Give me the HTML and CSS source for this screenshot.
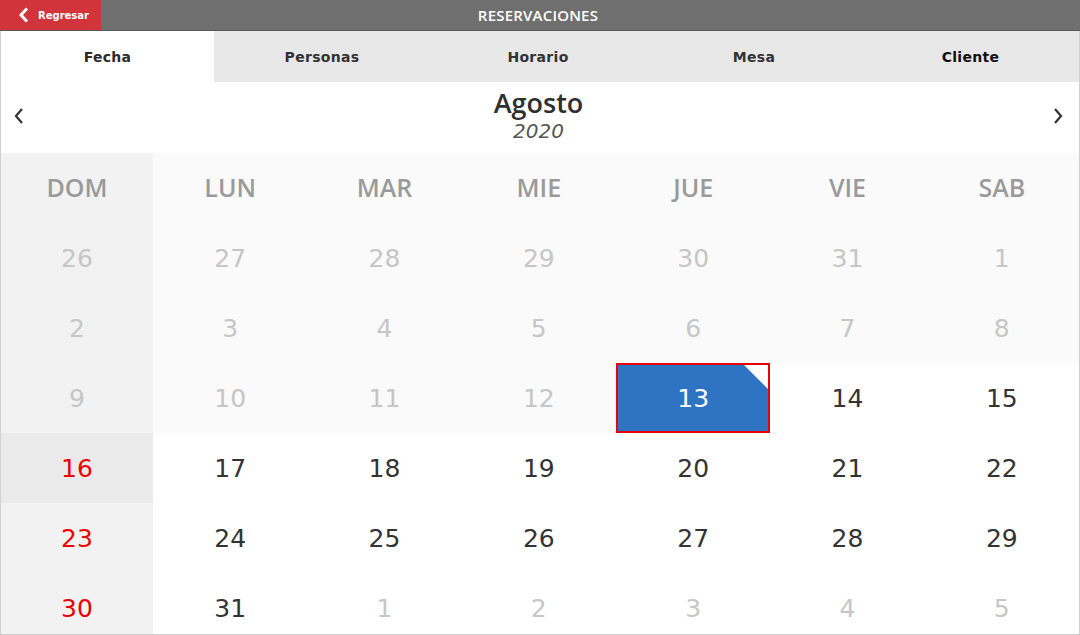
FILE: index.html
```html
<!DOCTYPE html>
<html lang="es">
<head>
<meta charset="utf-8">
<title>Reservaciones</title>
<link rel="stylesheet" href="styles.css">
</head>
<body>
<header class="topbar">
  <button class="back">
    <svg class="back-icon" width="10" height="16" viewBox="0 0 10 16"><path d="M8 1.5 L2 8 L8 14.5" fill="none" stroke="#fff" stroke-width="3"/></svg>
    <span>Regresar</span>
  </button>
  <h1 class="title">RESERVACIONES</h1>
  <span></span>
</header>
<main class="panel">
  <nav class="tabs">
    <div class="tab active">Fecha</div>
    <div class="tab">Personas</div>
    <div class="tab">Horario</div>
    <div class="tab">Mesa</div>
    <div class="tab">Cliente</div>
  </nav>
  <section class="month">
    <svg class="arrow" width="12" height="18" viewBox="0 0 12 18"><path d="M9 2 L3 9 L9 16" fill="none" stroke="#333" stroke-width="2.2"/></svg>
    <div class="month-title">
      <div class="month-name">Agosto</div>
      <div class="month-year">2020</div>
    </div>
    <svg class="arrow" width="12" height="18" viewBox="0 0 12 18"><path d="M3 2 L9 9 L3 16" fill="none" stroke="#333" stroke-width="2.2"/></svg>
  </section>
  <section class="calendar">
    <div class="dow sun">DOM</div>
    <div class="dow">LUN</div>
    <div class="dow">MAR</div>
    <div class="dow">MIE</div>
    <div class="dow">JUE</div>
    <div class="dow">VIE</div>
    <div class="dow">SAB</div>

    <div class="day sun past">26</div>
    <div class="day past">27</div>
    <div class="day past">28</div>
    <div class="day past">29</div>
    <div class="day past">30</div>
    <div class="day past">31</div>
    <div class="day past">1</div>

    <div class="day sun past">2</div>
    <div class="day past">3</div>
    <div class="day past">4</div>
    <div class="day past">5</div>
    <div class="day past">6</div>
    <div class="day past">7</div>
    <div class="day past">8</div>

    <div class="day sun past">9</div>
    <div class="day past">10</div>
    <div class="day past">11</div>
    <div class="day past">12</div>
    <div class="day selected">13</div>
    <div class="day">14</div>
    <div class="day">15</div>

    <div class="day sun red hover">16</div>
    <div class="day">17</div>
    <div class="day">18</div>
    <div class="day">19</div>
    <div class="day">20</div>
    <div class="day">21</div>
    <div class="day">22</div>

    <div class="day sun red">23</div>
    <div class="day">24</div>
    <div class="day">25</div>
    <div class="day">26</div>
    <div class="day">27</div>
    <div class="day">28</div>
    <div class="day">29</div>

    <div class="day sun red">30</div>
    <div class="day">31</div>
    <div class="day next">1</div>
    <div class="day next">2</div>
    <div class="day next">3</div>
    <div class="day next">4</div>
    <div class="day next">5</div>
  </section>
</main>
</body>
</html>
```

FILE: styles.css
```css
* { box-sizing: border-box; }
html, body { margin: 0; padding: 0; height: 100%; }
body {
  background: #fff;
  font-family: "DejaVu Sans", sans-serif;
  overflow: hidden;
  display: flex;
  flex-direction: column;
}

.topbar {
  height: 31px;
  flex: none;
  background: #6f6f6f;
  border-bottom: 1px solid #595959;
  display: grid;
  grid-template-columns: 101px 1fr 105px;
  align-items: center;
}
.back {
  height: 30px;
  margin: 0;
  border: 0;
  padding: 0 0 0 19px;
  background: #d1343a;
  color: #fff;
  display: flex;
  align-items: center;
  gap: 9px;
  font-family: "DejaVu Sans", sans-serif;
  font-weight: bold;
  font-size: 10px;
  cursor: pointer;
}
.back-icon { display: block; }
.title {
  margin: 0;
  text-align: center;
  color: #fff;
  font-family: "Open Sans", sans-serif;
  font-weight: 600;
  font-size: 15px;
  letter-spacing: 0.2px;
}

.panel {
  flex: 1;
  min-height: 0;
  border: 1px solid #cfcfcf;
  border-top: 0;
  overflow: hidden;
  display: flex;
  flex-direction: column;
}

.tabs {
  flex: none;
  height: 51px;
  display: grid;
  grid-template-columns: 213px 216px 216px 216px 1fr;
  background: #e8e8e8;
}
.tab {
  display: flex;
  align-items: center;
  justify-content: center;
  font-weight: bold;
  font-size: 14px;
  letter-spacing: 0.3px;
  color: #333;
}
.tab:last-child { color: #111; }
.tab.active { background: #fff; color: #2b2b2b; }

.month {
  flex: none;
  height: 71px;
  display: flex;
  align-items: center;
  justify-content: space-between;
  padding: 0 15px 2px 12px;
}
.arrow { display: block; margin-top: -2px; }
.month-title { text-align: center; margin-left: 0; }
.month-name {
  font-family: "Open Sans", sans-serif;
  font-weight: 600;
  font-size: 27px;
  color: #2f2f2f;
  line-height: 28px;
  margin-top: -1px;
}
.month-year {
  font-family: "DejaVu Sans", sans-serif;
  font-style: italic;
  font-size: 20px;
  color: #555;
  line-height: 26px;
  margin-top: 1px;
}

.calendar {
  flex: none;
  display: grid;
  grid-template-columns: 152px repeat(6, 1fr);
  grid-auto-rows: 70px;
}
.dow {
  display: flex;
  align-items: center;
  justify-content: center;
  font-family: "Open Sans", sans-serif;
  font-weight: 600;
  font-size: 25px;
  color: #9a9a9a;
  background: #fafafa;
  padding-bottom: 2px;
}
.day {
  display: flex;
  align-items: center;
  justify-content: center;
  font-size: 25px;
  color: #333;
  background: #fff;
  position: relative;
}
.day.past { background: #fafafa; color: #c6c6c6; }
.day.next { color: #c6c6c6; }
.sun, .day.sun { background: #f2f2f2; }
.day.hover { background: #eaeaea; }
.day.red { color: #ee0000; }
.day.selected {
  background: #2e74c2;
  color: #fff;
  border: 2px solid #e8000b;
}
.day.selected::after {
  content: "";
  position: absolute;
  top: 0;
  right: 0;
  width: 0;
  height: 0;
  border-style: solid;
  border-width: 0 24px 24px 0;
  border-color: transparent #fff transparent transparent;
}
```
